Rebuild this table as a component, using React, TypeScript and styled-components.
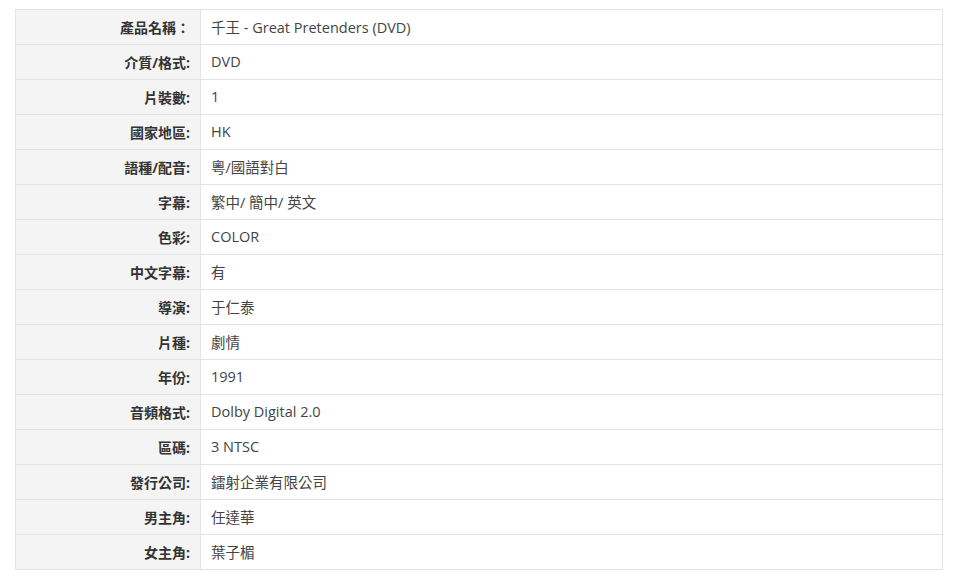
import React from "react";
import styled, { createGlobalStyle } from "styled-components";

const GlobalStyle = createGlobalStyle`
  body {
    margin: 0;
    background: #fff;
    font-family: "Open Sans", "Noto Sans CJK TC", sans-serif;
    color: #333;
  }
`;

const Page = styled.div`
  padding: 9px 20px 0 15px;
`;

const SpecTable = styled.table`
  width: 928px;
  border-collapse: collapse;
  border: 1px solid #e3e3e3;
  font-size: 14px;
`;

const Row = styled.tr`
  height: 35px;
  border-bottom: 1px solid #e3e3e3;
`;

const Label = styled.th`
  width: 185px;
  background: #f4f4f4;
  border-right: 1px solid #e3e3e3;
  text-align: right;
  padding: 0 10px 1px 0;
  font-weight: bold;
  color: #333;
  box-sizing: border-box;
`;

const Value = styled.td`
  padding: 0 10px 1px;
  font-size: 14.5px;
  color: #444;
`;

const specs: [string, string][] = [
  ["產品名稱：", "千王 - Great Pretenders (DVD)"],
  ["介質/格式:", "DVD"],
  ["片裝數:", "1"],
  ["國家地區:", "HK"],
  ["語種/配音:", "粵/國語對白"],
  ["字幕:", "繁中/ 簡中/ 英文"],
  ["色彩:", "COLOR"],
  ["中文字幕:", "有"],
  ["導演:", "于仁泰"],
  ["片種:", "劇情"],
  ["年份:", "1991"],
  ["音頻格式:", "Dolby Digital 2.0"],
  ["區碼:", "3 NTSC"],
  ["發行公司:", "鐳射企業有限公司"],
  ["男主角:", "任達華"],
  ["女主角:", "葉子楣"],
];

const App = () => {
  return (
    <Page>
      <GlobalStyle />
      <SpecTable>
        <tbody>
          {specs.map(([label, value]) => (
            <Row key={label}>
              <Label>{label}</Label>
              <Value>{value}</Value>
            </Row>
          ))}
        </tbody>
      </SpecTable>
    </Page>
  );
};

export default App;
